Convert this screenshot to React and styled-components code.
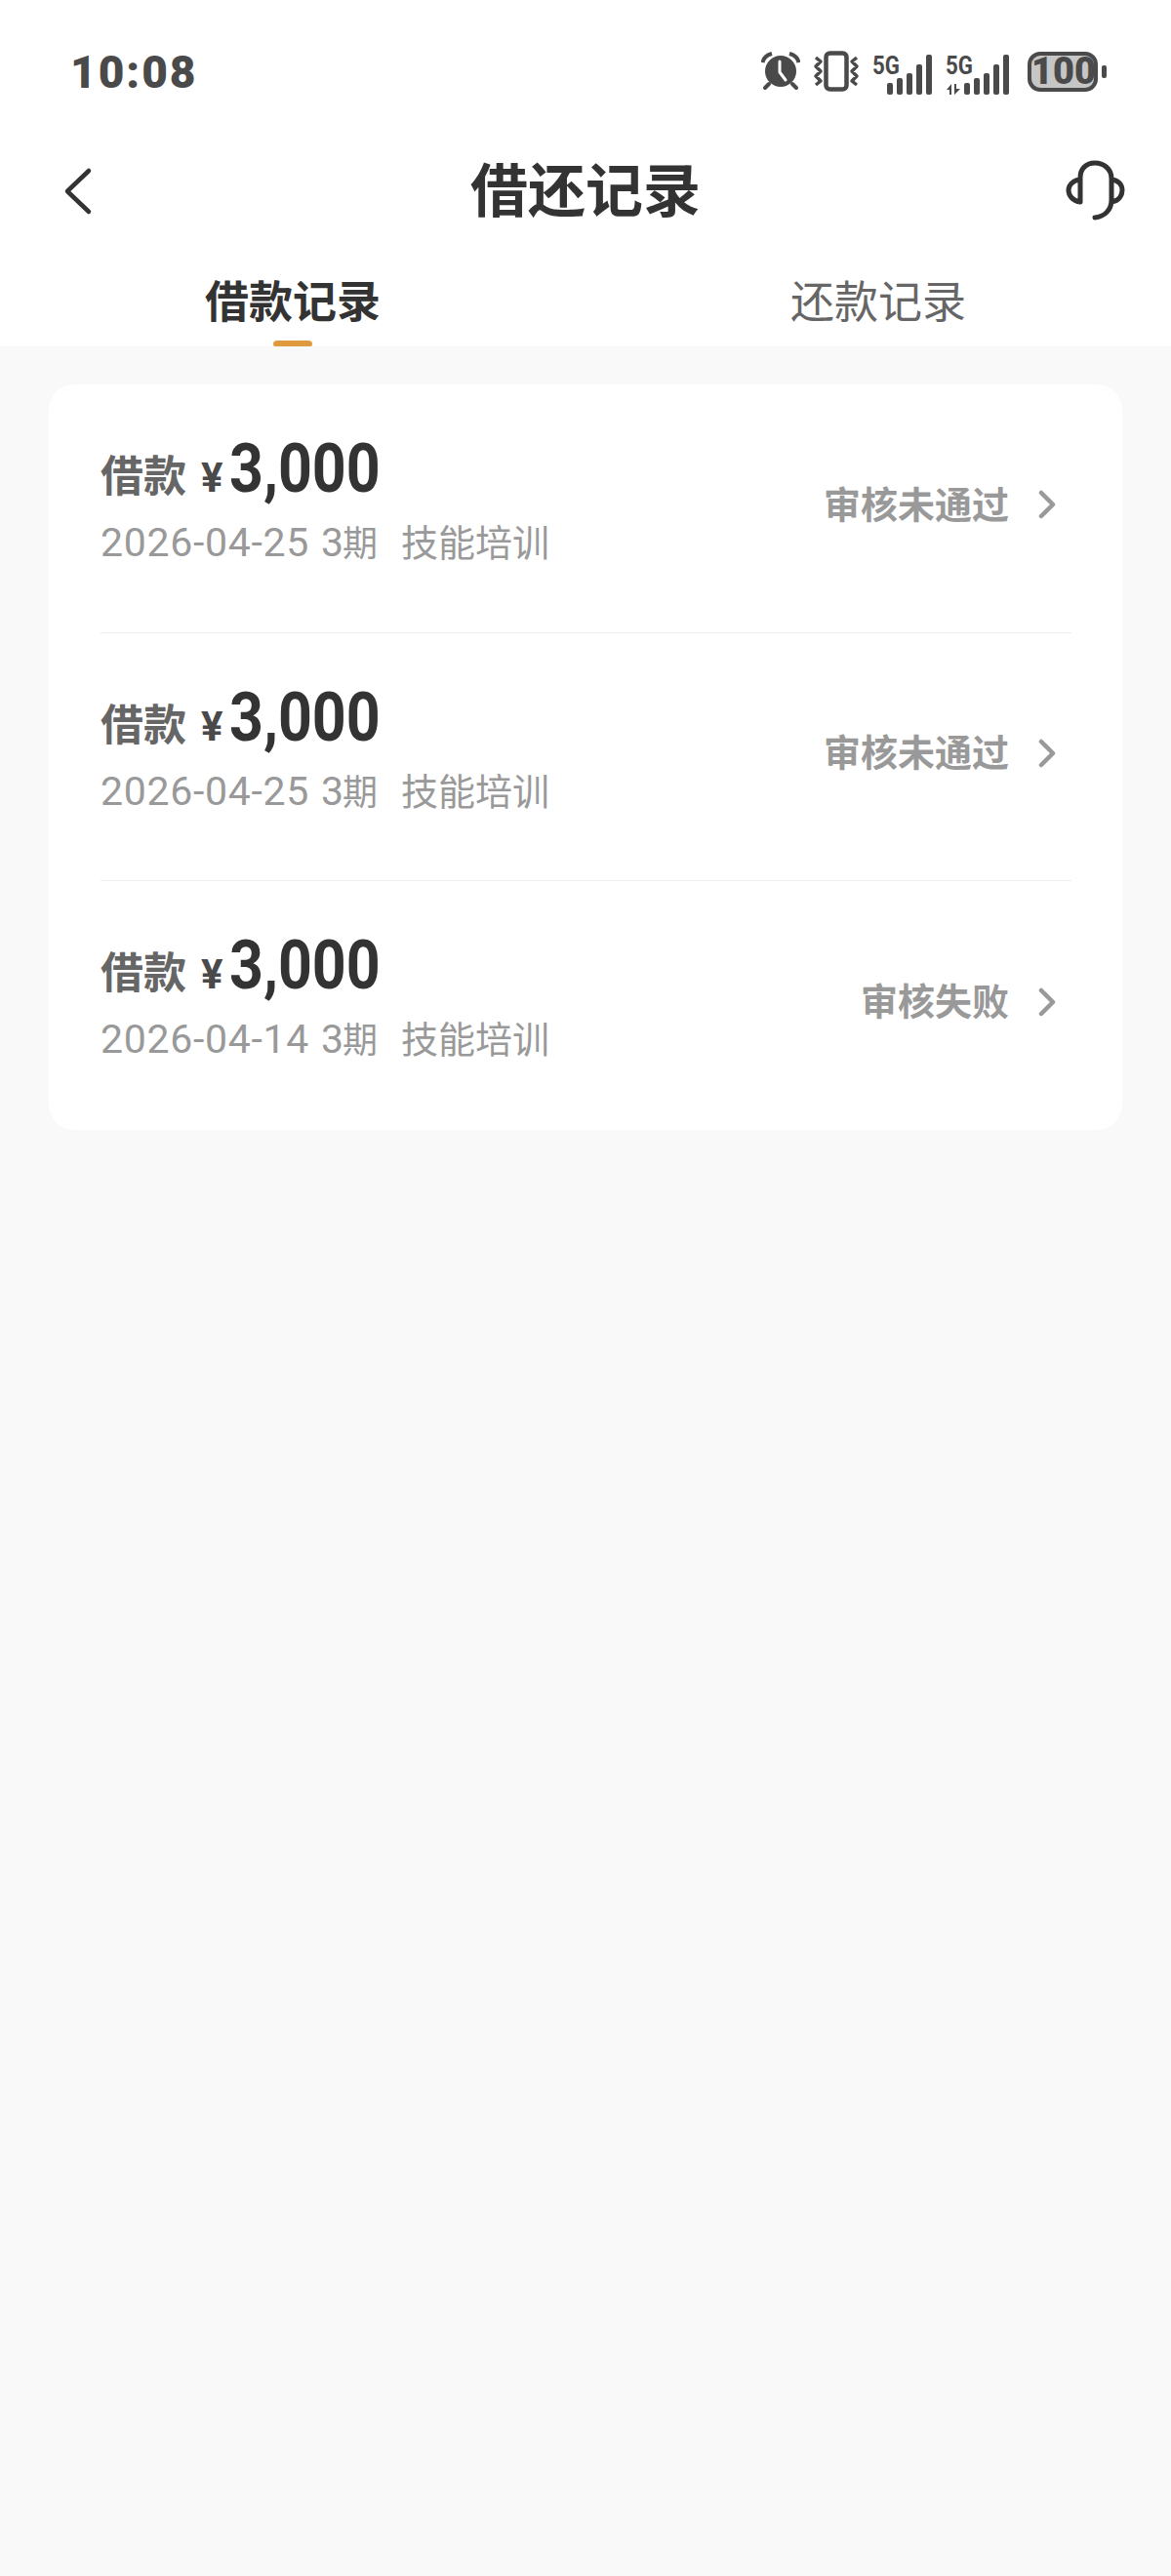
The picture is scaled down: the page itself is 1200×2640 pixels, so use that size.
import React from "react";
import styled, { createGlobalStyle } from "styled-components";

const CJK = `"Noto Sans CJK SC", "Noto Sans", sans-serif`;

const records = [
  { date: "2026-04-25", status: "审核未通过" },
  { date: "2026-04-25", status: "审核未通过" },
  { date: "2026-04-14", status: "审核失败" },
];

function SignalIcon({ transfer }) {
  const start = transfer ? 19 : 15;
  return (
    <SignalWrap>
      <svg width={start + 48} height="50" viewBox={`0 -8 ${start + 48} 50`}>
        <text
          x="0"
          y="20"
          fontFamily="Roboto, sans-serif"
          fontWeight="700"
          fontSize="26"
          textLength="28"
          lengthAdjust="spacingAndGlyphs"
          fill="#4a4a4a"
        >
          5G
        </text>
        {transfer ? (
          <path d="M6 30L1 36h3v5h2zM9 30v11l6-6h-4v-5z" fill="#4a4a4a" />
        ) : null}
        {[29, 24, 19, 10, 0].map((y, i) => (
          <rect key={y} x={start + i * 10} y={y} width="6" height={41 - y} rx="2" fill="#4a4a4a" />
        ))}
      </svg>
    </SignalWrap>
  );
}

function StatusBar() {
  return (
    <Status>
      <Clock>10:08</Clock>
      <StatusIcons>
        <svg width="40" height="40" viewBox="0 0 40 40">
          <circle cx="20" cy="20" r="16" fill="#4a4a4a" />
          <path d="M19 10v11l6 8" fill="none" stroke="#fff" strokeWidth="3" strokeLinecap="round" strokeLinejoin="round" />
          <path d="M1.5 11Q3 4 11 2M38.5 11Q37 4 29 2" fill="none" stroke="#4a4a4a" strokeWidth="4" />
          <path d="M8 33l-4 4M32 33l4 4" stroke="#4a4a4a" strokeWidth="4" strokeLinecap="round" />
        </svg>
        <svg width="50" height="42" viewBox="0 0 50 42">
          <rect x="14.5" y="2.5" width="21" height="37" rx="4" fill="none" stroke="#4a4a4a" strokeWidth="4.5" />
          <path
            d="M4 7l5 4-5 5 5 5-5 5 5 5-5 4M46 7l-5 4 5 5-5 5 5 5-5 5 5 4"
            fill="none"
            stroke="#4a4a4a"
            strokeWidth="3.5"
            strokeLinejoin="round"
          />
        </svg>
        <SignalIcon />
        <SignalIcon transfer />
        <Battery>
          <BatteryBody>100</BatteryBody>
          <BatteryTip />
        </Battery>
      </StatusIcons>
    </Status>
  );
}

function RecordRow({ date, status }) {
  return (
    <Row>
      <RowInfo>
        <AmountLine>
          <AmountLabel>借款</AmountLabel>
          <Yen>¥</Yen>
          <Amount>3,000</Amount>
        </AmountLine>
        <Meta>
          <MetaDate>{date}</MetaDate>
          <MetaTerm>3</MetaTerm>
          <MetaCjk>期</MetaCjk>
          <MetaPurpose>技能培训</MetaPurpose>
        </Meta>
      </RowInfo>
      <RowStatus>
        <span>{status}</span>
        <StatusArrow width="18" height="30" viewBox="0 0 18 30">
          <path d="M3 3l12 12L3 27" fill="none" stroke="#999" strokeWidth="4.5" strokeLinecap="round" strokeLinejoin="round" />
        </StatusArrow>
      </RowStatus>
    </Row>
  );
}

export default function App() {
  return (
    <Page>
      <GlobalStyle />
      <Header>
        <StatusBar />
        <Nav>
          <NavBack width="60" height="60" viewBox="0 0 60 60">
            <path d="M28 10L6 31l22 21" fill="none" stroke="#333" strokeWidth="4.5" strokeLinecap="round" strokeLinejoin="round" />
          </NavBack>
          <Title>借还记录</Title>
          <NavEnd>
            <svg width="62" height="62" viewBox="0 0 62 62">
              <path
                d="M15 43V18C15 9 21 3 30 3s17 6 17 16v22c0 10-7 17-17 18M15 20C7 21 3 26 3 31s4 11 12 12M47 20c8 1 11 6 11 11s-3 11-11 12"
                fill="none"
                stroke="#333"
                strokeWidth="5"
                strokeLinecap="round"
              />
            </svg>
          </NavEnd>
        </Nav>
        <Tabs>
          <Tab $active>
            借款记录
            <TabMark />
          </Tab>
          <Tab>
            还款记录
            <TabMark $hidden />
          </Tab>
        </Tabs>
      </Header>
      <Card>
        {records.map((r, i) => (
          <RecordRow key={i} date={r.date} status={r.status} />
        ))}
      </Card>
    </Page>
  );
}

const GlobalStyle = createGlobalStyle`
  html, body {
    margin: 0;
    padding: 0;
    background: #f9f9f9;
  }
  body {
    font-family: ${CJK};
  }
`;

const Page = styled.div`
  width: 1200px;
  height: 2640px;
  background: #f9f9f9;
  overflow: hidden;
`;

const Header = styled.header`
  background: #fff;
  height: 355px;
`;

const Status = styled.div`
  height: 130px;
  padding: 0 66px 0 72px;
  display: flex;
  align-items: flex-start;
  justify-content: space-between;
  box-sizing: border-box;
`;

const Clock = styled.div`
  margin-top: 47px;
  font: 900 46px/54px Roboto, sans-serif;
  letter-spacing: 2px;
  color: #4a4a4a;
`;

const StatusIcons = styled.div`
  margin-top: 52px;
  display: flex;
  align-items: center;
  height: 42px;
  gap: 12px;
`;

const SignalWrap = styled.div`
  display: flex;
  height: 42px;
  margin-top: -8px;
`;

const Battery = styled.div`
  display: flex;
  align-items: center;
  gap: 4px;
  margin-left: 5px;
`;

const BatteryBody = styled.div`
  width: 72px;
  height: 41px;
  box-sizing: border-box;
  border: 4px solid #4a4a4a;
  border-radius: 13px;
  background: #c6c6c6;
  color: #4a4a4a;
  font: 900 38px/33px Roboto, sans-serif;
  text-align: center;
`;

const BatteryTip = styled.div`
  width: 5px;
  height: 13px;
  border-radius: 2px;
  background: #4a4a4a;
`;

const Nav = styled.nav`
  height: 130px;
  padding: 0 46px;
  display: grid;
  grid-template-columns: 1fr auto 1fr;
  align-items: center;
  box-sizing: border-box;
`;

const NavBack = styled.svg`
  margin-left: 17px;
`;

const NavEnd = styled.div`
  display: flex;
  justify-content: flex-end;
`;

const Title = styled.h1`
  margin: 0 0 6px;
  font: 700 59px/70px ${CJK};
  color: #333;
`;

const Tabs = styled.div`
  display: grid;
  grid-template-columns: 600px 600px;
  padding-top: 16px;
`;

const Tab = styled.div`
  display: flex;
  flex-direction: column;
  align-items: center;
  font: ${(p) => (p.$active ? 700 : 400)} 45px/62px ${CJK};
  color: ${(p) => (p.$active ? "#333" : "#666")};
`;

const TabMark = styled.div`
  margin-top: 11px;
  width: 40px;
  height: 6px;
  border-radius: 4px 4px 2px 2px;
  background: ${(p) => (p.$hidden ? "transparent" : "#e09a3e")};
`;

const Card = styled.section`
  margin: 39px 50px 0;
  padding: 0 52px 0 53px;
  background: #fff;
  border-radius: 26px;
`;

const Row = styled.div`
  height: 254.5px;
  box-sizing: border-box;
  display: flex;
  justify-content: space-between;
  align-items: center;
  border-bottom: 1px solid #eee;
  &:last-child {
    border-bottom: 0;
  }
`;

const RowInfo = styled.div`
  align-self: flex-start;
  padding-top: 46px;
  display: flex;
  flex-direction: column;
  gap: 9px;
`;

const AmountLine = styled.div`
  display: flex;
  align-items: baseline;
  height: 80px;
`;

const AmountLabel = styled.span`
  font: 700 44px/80px ${CJK};
  color: #666;
`;

const Yen = styled.span`
  margin-left: 15px;
  font: 700 42px/80px Roboto, sans-serif;
  color: #4a4a4a;
`;

const Amount = styled.span`
  display: inline-block;
  margin-left: 6px;
  font: 700 70px/80px Roboto, sans-serif;
  color: #333;
  transform: scaleX(0.87);
  transform-origin: left center;
`;

const Meta = styled.div`
  display: flex;
  align-items: baseline;
  height: 50px;
  color: #999;
`;

const MetaDate = styled.span`
  font: 400 41px/50px Roboto, sans-serif;
  letter-spacing: 0.7px;
  margin-right: 12px;
`;

const MetaTerm = styled.span`
  font: 400 41px/50px Roboto, sans-serif;
  margin-right: -1px;
`;

const MetaCjk = styled.span`
  font: 400 36px/50px ${CJK};
`;

const MetaPurpose = styled(MetaCjk)`
  margin-left: 24px;
  font-size: 38px;
`;

const RowStatus = styled.div`
  display: flex;
  align-items: center;
  gap: 30px;
  padding-right: 16px;
  margin-bottom: 12px;
  font: 700 38px/50px ${CJK};
  color: #999;
`;

const StatusArrow = styled.svg`
  margin-top: 5px;
`;
